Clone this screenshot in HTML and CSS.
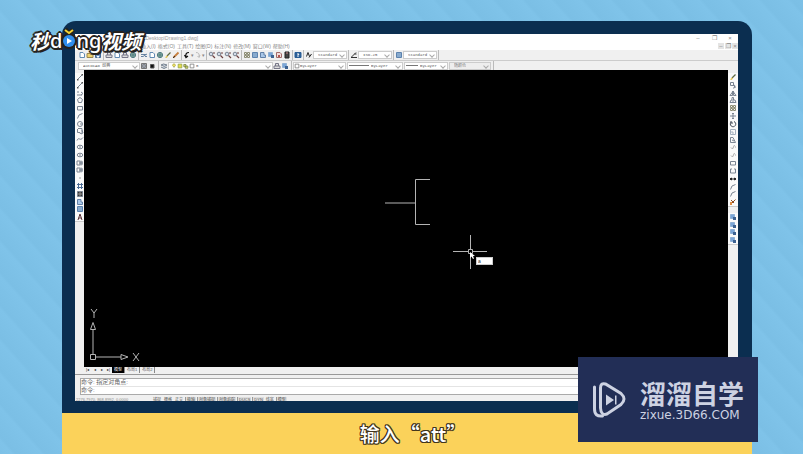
FILE: index.html
```
<!DOCTYPE html>
<html lang="zh-CN">
<head>
    <meta charset="UTF-8">
    <meta name="viewport" content="width=device-width, initial-scale=1.0">
    <title>AutoCAD</title>
    <link rel="stylesheet" href="styles.css">
</head>
<body>
    <!-- Iconos -->
    <svg class="sprite" aria-hidden="true">
        <symbol id="line" viewBox="0 0 8 8"><path d="M1.5 6.5 6.5 1.5"/><path d="M1 6h1.500v1.500H1zM5.500 1H7v1.500H5.500z" fill="#555" stroke="none"/></symbol>
        <symbol id="pline" viewBox="0 0 8 8"><path d="M1 3h2M1 6h5M5 3l2 1.500L5 6"/></symbol>
        <symbol id="polygon" viewBox="0 0 8 8"><path d="M4 1.500 6.500 3.500 5.500 6.500H2.500L1.500 3.500z"/></symbol>
        <symbol id="rect" viewBox="0 0 8 8"><path d="M1.500 2.500h5v3.500h-5z"/></symbol>
        <symbol id="arc" viewBox="0 0 8 8"><path d="M1.500 6.500Q2 2 6.500 1.500"/></symbol>
        <symbol id="circle" viewBox="0 0 8 8"><circle cx="4" cy="4" r="2.500"/><path d="M4 4h2"/></symbol>
        <symbol id="cloud" viewBox="0 0 8 8"><path d="M2 1.500h4v4L4.500 7 4 5.500H1.500V2M6 3l1 3-2 1"/></symbol>
        <symbol id="spline" viewBox="0 0 8 8"><path d="M1 5.500C3 1 4 7 7 2.500"/></symbol>
        <symbol id="ellipse" viewBox="0 0 8 8"><ellipse cx="4" cy="4" rx="2.800" ry="1.800"/><path d="M4 3v2"/></symbol>
        <symbol id="block" viewBox="0 0 8 8"><path d="M1 2h3v4H1zM5 1.500v5M3 4h4M6 2v4"/></symbol>
        <symbol id="point" viewBox="0 0 8 8"><path d="M3.500 3.500h1v1h-1z" fill="#444" stroke="none"/></symbol>
        <symbol id="hatch" viewBox="0 0 8 8"><path d="M2.500 1v6M5.500 1v6M1 2.500h6M1 5.500h6" stroke="#4b6b94"/></symbol>
        <symbol id="fill" viewBox="0 0 8 8"><path d="M1.500 1.500h5v5h-5z" fill="#333"/><path d="M4 1.500v5M1.500 4h5" stroke="#999"/></symbol>
        <symbol id="region" viewBox="0 0 8 8"><path d="M1.500 1.500H5V4h1.500v2.500h-5z" fill="#a9c7e8" stroke="#6281a8"/></symbol>
        <symbol id="table" viewBox="0 0 8 8"><path d="M1.500 1.500h5v5h-5z" fill="#b4d1ed" stroke="#5d83ae"/><path d="M1.500 3h5M1.500 5h5" stroke="#5d83ae"/></symbol>
        <symbol id="text" viewBox="0 0 8 8"><path d="M2 7 4 1l2 6M2.700 5h2.600" stroke="#5a3338"/></symbol>
        <symbol id="brush" viewBox="0 0 8 8"><path d="M3 5 6.500 1.500" stroke="#5f6b45" stroke-width="1.300"/><path d="M1 6.500 3 4.500l1 1-1.500 1.500z" fill="#e3c34b" stroke="none"/></symbol>
        <symbol id="pencil" viewBox="0 0 8 8"><path d="M1.500 6.500 6.500 1.500" stroke="#c77f3e" stroke-width="1.800"/><path d="M1 7 3 5" stroke="#333"/></symbol>
        <symbol id="copy" viewBox="0 0 8 8"><path d="M1.500 1.500h3v3h-3zM4 4l2.500 2.500M4 7a1.500 1.500 0 1 0 1-3"/></symbol>
        <symbol id="mirror" viewBox="0 0 8 8"><path d="M1 6.500h2.500V3zM7 6.500H4.500V3zM3 2.500h2"/></symbol>
        <symbol id="offset" viewBox="0 0 8 8"><path d="M1 6.500h6L6 4H4.500V1.500H3V4H2zM3 5h2"/></symbol>
        <symbol id="array" viewBox="0 0 8 8"><path d="M1.500 1.500h2v2h-2zM4.500 1.500h2v2h-2zM1.500 4.500h2v2h-2zM4.500 4.500h2v2h-2z" stroke="#8c8c72"/></symbol>
        <symbol id="move" viewBox="0 0 8 8"><path d="M4 1v6M1 4h6"/><path d="M3 2l1-1 1 1M3 6l1 1 1-1" fill="none"/></symbol>
        <symbol id="rotate" viewBox="0 0 8 8"><path d="M2.500 1.800A2.700 2.700 0 1 0 5 1.500M2 1v2h2" stroke="#444c58"/></symbol>
        <symbol id="scale" viewBox="0 0 8 8"><path d="M1.500 1.500h5v5h-5zM1.500 4h2.500v2.500" stroke="#a6b2c0"/></symbol>
        <symbol id="stretch" viewBox="0 0 8 8"><path d="M1.500 6.500v-5H4l2.500 5zM3 4l2 1" stroke="#7d8794"/></symbol>
        <symbol id="trim" viewBox="0 0 8 8"><path d="M2 4.500 3.500 6 5.500 2M6 4h1" stroke="#aaa"/></symbol>
        <symbol id="break" viewBox="0 0 8 8"><path d="M3 2H1.500v4H3M5 2h1.500v4H5M3 6h2"/></symbol>
        <symbol id="join" viewBox="0 0 8 8"><path d="M1 4h6M2.500 3v2L1 4zM5.500 3v2L7 4z" stroke="#222" fill="#222"/></symbol>
        <symbol id="explode" viewBox="0 0 8 8"><path d="M1.500 6.500 6.500 1.500M2 2l3 3" stroke="#8f4d22"/><path d="M1 4h2v3H1z" fill="#dc8c44" stroke="none"/></symbol>
        <symbol id="order" viewBox="0 0 8 8"><path d="M1.500 1.500h4v4h-4z" fill="#7ba6d8" stroke="#8fb0d4"/><path d="M4 4h3v3H4z" fill="#3d6291" stroke="none"/></symbol>
        <symbol id="page" viewBox="0 0 8 8"><path d="M2 1.500h3L6.500 3v3.500H2z" fill="#fff" stroke="#638bb4"/></symbol>
        <symbol id="folder" viewBox="0 0 8 8"><path d="M1 2.500h3l.5 1H7v3H1z" fill="#efd26e" stroke="#9a8750"/></symbol>
        <symbol id="save" viewBox="0 0 8 8"><path d="M1.500 1.500h5v5h-5z" fill="#7399c5" stroke="#426994"/><path d="M3 5h2v1.500H3z" fill="#fff" stroke="none"/></symbol>
        <symbol id="print" viewBox="0 0 8 8"><path d="M1 4h6v2.500H1zM2.500 4V1.500h3V4" fill="#ddd" stroke="#778"/></symbol>
        <symbol id="globe" viewBox="0 0 8 8"><circle cx="4" cy="4" r="2.600" fill="#9ec5aa" stroke="#4b7580"/><path d="M2 4h4M4 2v4" stroke="#4b7580"/></symbol>
        <symbol id="cut" viewBox="0 0 8 8"><path d="M1 3.500h5M1 5.500h2L7 3M5 5.500h2" stroke="#6582a1"/></symbol>
        <symbol id="undo" viewBox="0 0 8 8"><path d="M6 1.500Q2 1.500 3 6M1.500 4 3 6.500 5 5" stroke="#111" stroke-width="1.200"/></symbol>
        <symbol id="redo" viewBox="0 0 8 8"><path d="M2 1.500q4 0 3 4.500M3.500 5 5 6.500 6 4" stroke="#bbb"/></symbol>
        <symbol id="zoomer" viewBox="0 0 8 8"><circle cx="3" cy="3" r="1.800" fill="#d3dce8"/><path d="M4.500 4.500 7 7M5 2h2" stroke="#6d3f3f" stroke-width="1.200"/></symbol>
        <symbol id="red" viewBox="0 0 8 8"><path d="M1.500 1.500h3.500L6.500 3v3.500h-5z" fill="#f3dede" stroke="#a36b68"/><path d="M3 4h2v2H3z" fill="#b5544f" stroke="none"/></symbol>
        <symbol id="calc" viewBox="0 0 8 8"><path d="M2 1h4v6H2z" fill="#444" stroke="#222"/><path d="M3 2h2" stroke="#c88"/></symbol>
        <symbol id="help" viewBox="0 0 8 8"><path d="M1 1.500h6v5H1z" fill="#2b5e96" stroke="#2b5e96"/><path d="M3 3h2L4 4.500V6" stroke="#fff"/></symbol>
        <symbol id="astyle" viewBox="0 0 8 8"><path d="M1.500 5.500 3 1.500l1.500 4M4 6.500 6.500 3" stroke="#222"/></symbol>
        <symbol id="dim" viewBox="0 0 8 8"><path d="M1 6.500h6M1.500 6 6 1.500M4.500 3h2" stroke="#333"/></symbol>
        <symbol id="gear" viewBox="0 0 8 8"><path d="M1.500 1.500h5v5h-5z" fill="#aaa" stroke="#777"/><circle cx="4" cy="4" r="1.500"/></symbol>
        <symbol id="solid" viewBox="0 0 8 8"><path d="M2.500 2.500h3.500v3.500H2.500z" fill="#111" stroke="#555"/></symbol>
        <symbol id="layers" viewBox="0 0 8 8"><path d="M1 3 3.500 2 7 3 4.500 4.500zM1 5l3 1.500L7 5" fill="#c7d1dd" stroke="#77828f"/></symbol>
        <symbol id="bulb" viewBox="0 0 8 8"><circle cx="4" cy="3" r="1.800" fill="#f7ee72" stroke="#aca33c"/><path d="M3.500 6h1"/></symbol>
        <symbol id="sun" viewBox="0 0 8 8"><path d="M1.500 1.500h5v5h-5z" fill="#e7dc49" stroke="#8ca14f"/></symbol>
        <symbol id="lock" viewBox="0 0 8 8"><path d="M1 2h3v3H1zM3 4h3.500v3H3z" fill="#d5d96a" stroke="#768046"/></symbol>
        <symbol id="swatch" viewBox="0 0 8 8"><path d="M1.500 1.500h5v5h-5z" fill="#fff" stroke="#777"/></symbol>
    </svg>

    <a href="#" class="logo" aria-label="秒dong视频">秒<span class="latin">d</span><svg class="play" viewBox="0 0 14 24"><path d="M3 1l4 5 4-4" fill="none" stroke="#25221f" stroke-width="5"/><circle cx="7" cy="13" r="8" fill="#25221f"/><circle cx="7" cy="13" r="6" fill="#2f8ded"/><path d="M3 2l4 3 4-3" fill="none" stroke="#f5d331" stroke-width="2"/><path d="M5 10v6l5-3z" fill="#fff"/></svg><span class="latin">ng</span>视频</a>

    <main class="tablet">
        <div class="window">
            <header class="titlebar">
                <h1>\Desktop\Drawing1.dwg]</h1>
                <div class="controls">
                    <button aria-label="最小化">–</button>
                    <button aria-label="还原">❐</button>
                    <button aria-label="关闭">×</button>
                </div>
            </header>

            <nav class="menu">
                <a href="#">插入(I)</a>
                <a href="#">格式(O)</a>
                <a href="#">工具(T)</a>
                <a href="#">绘图(D)</a>
                <a href="#">标注(N)</a>
                <a href="#">修改(M)</a>
                <a href="#">窗口(W)</a>
                <a href="#">帮助(H)</a>
                <div class="controls small">
                    <button aria-label="最小化">–</button>
                    <button aria-label="还原">❐</button>
                    <button aria-label="关闭">×</button>
                </div>
            </nav>

            <!-- Barra estándar -->
            <div class="toolbar">
                <div class="group">
                    <button aria-label="新建"><svg><use href="#page"/></svg></button>
                    <button aria-label="打开"><svg><use href="#folder"/></svg></button>
                    <button aria-label="保存"><svg><use href="#save"/></svg></button>
                </div>
                <div class="group">
                    <button aria-label="打印"><svg><use href="#print"/></svg></button>
                    <button aria-label="预览"><svg><use href="#page"/></svg></button>
                    <button aria-label="发布"><svg><use href="#print"/></svg></button>
                    <button aria-label="网络"><svg><use href="#globe"/></svg></button>
                </div>
                <div class="group">
                    <button aria-label="剪切"><svg><use href="#cut"/></svg></button>
                    <button aria-label="复制"><svg><use href="#page"/></svg></button>
                    <button aria-label="粘贴"><svg><use href="#globe"/></svg></button>
                    <button aria-label="特性匹配"><svg><use href="#brush"/></svg></button>
                    <button aria-label="块编辑器"><svg><use href="#pencil"/></svg></button>
                </div>
                <div class="group">
                    <button aria-label="放弃"><svg><use href="#undo"/></svg></button>
                    <button class="drop" aria-label="放弃列表">▾</button>
                    <button aria-label="重做"><svg><use href="#redo"/></svg></button>
                    <button class="drop" aria-label="重做列表">▾</button>
                </div>
                <div class="group">
                    <button aria-label="平移"><svg><use href="#zoomer"/></svg></button>
                    <button aria-label="实时缩放"><svg><use href="#zoomer"/></svg></button>
                    <button aria-label="窗口缩放"><svg><use href="#zoomer"/></svg></button>
                    <button aria-label="缩放上一个"><svg><use href="#zoomer"/></svg></button>
                </div>
                <div class="group">
                    <button aria-label="特性"><svg><use href="#array"/></svg></button>
                    <button aria-label="设计中心"><svg><use href="#table"/></svg></button>
                    <button aria-label="工具选项板"><svg><use href="#region"/></svg></button>
                    <button aria-label="图纸集"><svg><use href="#order"/></svg></button>
                    <button aria-label="标记集"><svg><use href="#red"/></svg></button>
                    <button aria-label="计算器"><svg><use href="#calc"/></svg></button>
                </div>
                <div class="group">
                    <button aria-label="帮助"><svg><use href="#help"/></svg></button>
                </div>
                <div class="group">
                    <svg><use href="#astyle"/></svg>
                    <div class="combo w-style"><select aria-label="文字样式"><option>Standard</option></select></div>
                </div>
                <div class="group">
                    <svg><use href="#dim"/></svg>
                    <div class="combo w-style"><select aria-label="标注样式"><option>ISO-25</option></select></div>
                </div>
                <div class="group">
                    <svg><use href="#table"/></svg>
                    <div class="combo w-style"><select aria-label="表格样式"><option>Standard</option></select></div>
                </div>
            </div>

            <!-- Barra de capas y propiedades -->
            <div class="toolbar second">
                <div class="group">
                    <div class="combo w-space"><select aria-label="工作空间"><option>AutoCAD 经典</option></select></div>
                    <button aria-label="设置"><svg><use href="#gear"/></svg></button>
                    <button aria-label="我的工作空间"><svg><use href="#solid"/></svg></button>
                </div>
                <div class="group">
                    <button aria-label="图层特性"><svg><use href="#layers"/></svg></button>
                    <div class="combo w-layer">
                        <svg><use href="#bulb"/></svg><svg><use href="#sun"/></svg><svg><use href="#lock"/></svg><svg><use href="#swatch"/></svg>
                        <select aria-label="图层"><option>0</option></select>
                    </div>
                    <button aria-label="置为当前"><svg><use href="#print"/></svg></button>
                    <button aria-label="上一个图层"><svg><use href="#order"/></svg></button>
                </div>
                <div class="group">
                    <div class="combo w-color"><svg><use href="#swatch"/></svg><select aria-label="颜色"><option>ByLayer</option></select></div>
                    <div class="combo w-type"><i class="stroke long"></i><select aria-label="线型"><option>ByLayer</option></select></div>
                    <div class="combo w-weight"><i class="stroke"></i><select aria-label="线宽"><option>ByLayer</option></select></div>
                    <div class="combo w-plot"><select aria-label="打印样式" disabled><option>随颜色</option></select></div>
                </div>
            </div>

            <div class="workspace">
                <div class="tools left">
                    <div class="draw">
                        <button aria-label="直线"><svg><use href="#line"/></svg></button>
                        <button aria-label="构造线"><svg><use href="#line"/></svg></button>
                        <button aria-label="多段线"><svg><use href="#pline"/></svg></button>
                        <button aria-label="正多边形"><svg><use href="#polygon"/></svg></button>
                        <button aria-label="矩形"><svg><use href="#rect"/></svg></button>
                        <button aria-label="圆弧"><svg><use href="#arc"/></svg></button>
                        <button aria-label="圆"><svg><use href="#circle"/></svg></button>
                        <button aria-label="修订云线"><svg><use href="#cloud"/></svg></button>
                        <button aria-label="样条曲线"><svg><use href="#spline"/></svg></button>
                        <button aria-label="椭圆"><svg><use href="#ellipse"/></svg></button>
                        <button aria-label="椭圆弧"><svg><use href="#ellipse"/></svg></button>
                        <button aria-label="插入块"><svg><use href="#block"/></svg></button>
                        <button aria-label="创建块"><svg><use href="#block"/></svg></button>
                        <button aria-label="点"><svg><use href="#point"/></svg></button>
                        <button aria-label="图案填充"><svg><use href="#hatch"/></svg></button>
                        <button aria-label="渐变色"><svg><use href="#fill"/></svg></button>
                        <button aria-label="面域"><svg><use href="#region"/></svg></button>
                        <button aria-label="表格"><svg><use href="#table"/></svg></button>
                        <button aria-label="多行文字"><svg><use href="#text"/></svg></button>
                    </div>
                </div>

                <div class="canvas">
                    <svg class="shape" viewBox="0 0 46 48"><path d="M0 24h30M45 .5H30.500v45H45"/></svg>

                    <div class="crosshair">
                        <svg viewBox="0 0 34 34"><path d="M0 16.500h34M17.500 0v34"/><path d="M15.500 14.500h4v4h-4z" fill="#000"/><path d="M17 17v6l1.500-1.500 1.500 2.500 1-.5-1-2.500h2z" fill="#fff" stroke="none"/></svg>
                        <input type="text" value="a" aria-label="动态输入">
                    </div>

                    <svg class="ucs" viewBox="0 0 50 54">
                        <path d="M.5 45.500h5v5h-5zM3 45V20M.5 20.500 3 13.500 5.500 20.500zM6 48h25M31 45.500l7 2.500-7 2.500z"/>
                        <path d="M1 0l3 4 3-4M4 4v5M43 44l6 8M49 44l-6 8"/>
                    </svg>
                </div>

                <div class="tools right">
                    <div class="modify">
                        <button aria-label="删除"><svg><use href="#brush"/></svg></button>
                        <button aria-label="复制对象"><svg><use href="#copy"/></svg></button>
                        <button aria-label="镜像"><svg><use href="#mirror"/></svg></button>
                        <button aria-label="偏移"><svg><use href="#offset"/></svg></button>
                        <button aria-label="阵列"><svg><use href="#array"/></svg></button>
                        <button aria-label="移动"><svg><use href="#move"/></svg></button>
                        <button aria-label="旋转"><svg><use href="#rotate"/></svg></button>
                        <button aria-label="缩放"><svg><use href="#scale"/></svg></button>
                        <button aria-label="拉伸"><svg><use href="#stretch"/></svg></button>
                        <button aria-label="修剪"><svg><use href="#trim"/></svg></button>
                        <button aria-label="延伸"><svg><use href="#trim"/></svg></button>
                        <button aria-label="打断于点"><svg><use href="#rect"/></svg></button>
                        <button aria-label="打断"><svg><use href="#break"/></svg></button>
                        <button aria-label="合并"><svg><use href="#join"/></svg></button>
                        <button aria-label="倒角"><svg><use href="#arc"/></svg></button>
                        <button aria-label="圆角"><svg><use href="#arc"/></svg></button>
                        <button aria-label="分解"><svg><use href="#explode"/></svg></button>
                    </div>
                    <div class="draworder">
                        <button aria-label="前置"><svg><use href="#order"/></svg></button>
                        <button aria-label="后置"><svg><use href="#order"/></svg></button>
                        <button aria-label="置于对象之上"><svg><use href="#order"/></svg></button>
                        <button aria-label="置于对象之下"><svg><use href="#order"/></svg></button>
                    </div>
                </div>
            </div>

            <div class="tabs">
                <button class="arrow" aria-label="第一个">|◂</button>
                <button class="arrow" aria-label="上一个">◂</button>
                <button class="arrow" aria-label="下一个">▸</button>
                <button class="arrow" aria-label="最后一个">▸|</button>
                <button class="tab active">模型</button>
                <button class="tab">布局1</button>
                <button class="tab">布局2</button>
            </div>

            <div class="command">
                <p>命令: 指定对角点:</p>
                <label>命令:<input type="text" aria-label="命令"></label>
            </div>

            <footer class="status">
                <span class="coords">2276.7970, 868.8992, 0.0000</span>
                <button>捕捉</button>
                <button>栅格</button>
                <button>正交</button>
                <button class="on">极轴</button>
                <button class="on">对象捕捉</button>
                <button class="on">对象追踪</button>
                <button class="on">DUCS</button>
                <button class="on">DYN</button>
                <button>线宽</button>
                <button class="on">模型</button>
            </footer>
        </div>
    </main>

    <p class="caption">输入“att”</p>

    <!-- Marca de agua -->
    <aside class="watermark">
        <svg viewBox="0 0 36 38">
            <path d="M2.500 6v22q0 8 8 7" />
            <path d="M8.500 27V7q0-5.500 5-4L29 12.500q6 5.500 0 11L15 33q-6 2-6.500-6" />
            <path d="M14 13.500v11l8-5.500zM23 14.500h1.500v9H23z" class="solid" />
        </svg>
        <div>
            <strong>溜溜自学</strong>
            <span>zixue.3D66.COM</span>
        </div>
    </aside>
</body>
</html>
```
FILE: styles.css
```
* {
    box-sizing: border-box;
}
body {
    position: relative;
    display: flex;
    flex-direction: column;
    min-height: 100vh;
    margin: 0;
    padding: 21px 51px 0 62px;
    font-family: "Liberation Sans", "Noto Sans CJK SC", sans-serif;
    background: repeating-linear-gradient(48deg, #7dc1e7 0, #7fc3e9 9px, #7bbfe5 12px, #7dc1e7 22px);
    overflow: hidden;
}
button {
    display: flex;
    align-items: center;
    justify-content: center;
    padding: 0;
    border: none;
    background: none;
    color: inherit;
    font: inherit;
    cursor: pointer;
}
a {
    color: inherit;
    text-decoration: none;
}
.sprite {
    position: absolute;
    width: 0;
    height: 0;
}

/* Logo */
.logo {
    position: absolute;
    top: 27px;
    left: 30px;
    z-index: 2;
    display: flex;
    align-items: center;
    height: 26px;
    color: #fff;
    font: italic bold 20px "Noto Sans CJK SC", sans-serif;
    text-shadow: 2px 0 #25221f, -2px 0 #25221f, 0 2px #25221f, 0 -2px #25221f,
        1px 1px #25221f, -1px -1px #25221f, 1px -1px #25221f, -1px 1px #25221f, 2px 2px #25221f;
}
.logo .latin {
    font: 500 20px "Noto Sans", sans-serif;
}
.play {
    width: 14px;
    height: 24px;
    overflow: visible;
}

/* Tableta */
.tablet {
    display: flex;
    flex: 1;
    padding: 13px 14px 12px 13px;
    border-radius: 14px 14px 0 0;
    background: #0b2e50;
}
.window {
    display: flex;
    flex: 1;
    flex-direction: column;
    min-width: 0;
    background: #f0f0f0;
    color: #888;
    font-size: 5px;
    line-height: 6px;
    overflow: hidden;
}
.titlebar,
.menu {
    display: flex;
    align-items: center;
    height: 8px;
    background: #fff;
}
.titlebar h1 {
    margin: 0;
    padding-left: 69px;
    color: #999;
    font-size: 5px;
    font-weight: normal;
}
.menu {
    gap: 2px;
    padding-left: 66px;
    white-space: nowrap;
}
.controls {
    display: flex;
    gap: 8px;
    margin-left: auto;
    padding-right: 4px;
    font-size: 6px;
}
.controls button {
    width: 8px;
    height: 6px;
}
.controls.small {
    gap: 1px;
    padding-right: 0;
}
.controls.small button {
    width: 6px;
    background: #e4e4e4;
}

/* Barras de herramientas */
.window svg {
    flex: none;
    width: 8px;
    height: 8px;
    fill: none;
    stroke: #7a8492;
    stroke-width: 1;
}
.toolbar {
    display: flex;
    height: 10px;
    padding-left: 3px;
}
.toolbar.second {
    border-top: 1px solid #ccc;
}
.group {
    display: flex;
    align-items: center;
    padding-right: 1px;
    border-right: 1px solid #bbb;
    margin-right: 1px;
}
.second .group {
    padding-right: 2px;
}
.toolbar .drop {
    width: 3px;
    font-size: 5px;
}
.combo {
    position: relative;
    display: flex;
    align-items: center;
    height: 8px;
    border: 1px solid #ccc;
    background: #fff;
}
.combo::after {
    content: "";
    position: absolute;
    top: 1px;
    right: 2px;
    width: 3px;
    height: 3px;
    border: solid #aaa;
    border-width: 0 1px 1px 0;
    transform: rotate(45deg);
}
.combo select {
    flex: 1;
    min-width: 0;
    padding: 0 0 0 4px;
    border: none;
    background: none;
    color: #555;
    font: 4px/6px "Liberation Mono", "Noto Sans CJK SC", monospace;
    appearance: none;
}
.combo svg {
    width: 6px;
    height: 6px;
}
.w-style {
    width: 34px;
}
.w-space {
    width: 62px;
}
.w-layer {
    width: 105px;
    padding-left: 2px;
}
.second .w-layer select {
    padding-left: 1px;
}
.w-color {
    width: 53px;
    margin-right: 1px;
}
.second .w-color select {
    padding-left: 0;
}
.w-type {
    width: 56px;
    margin-right: 1px;
}
.w-weight {
    width: 44px;
    margin-right: 1px;
}
.w-plot {
    width: 42px;
    background: #eee;
}
.stroke {
    width: 12px;
    height: 1px;
    margin-left: 1px;
    background: #777;
}
.stroke.long {
    width: 20px;
}
.stroke + select {
    padding-left: 2px;
}

/* Zona de dibujo */
.workspace {
    display: flex;
    flex: 1;
}
.tools {
    display: flex;
    flex-direction: column;
    gap: 6px;
    padding: 3px 0 0;
}
.left {
    width: 9px;
}
.right {
    width: 10px;
}
.tools > div {
    display: flex;
    flex-direction: column;
    background: #fafafa;
    border-bottom: 1px solid #ccc;
}
.tools button {
    flex: 1;
    min-height: 0;
}
.draw {
    height: 149px;
}
.modify {
    height: 134px;
}
.draworder {
    height: 32px;
}
.canvas {
    position: relative;
    flex: 1;
    background: #000;
}
.canvas svg {
    position: absolute;
    stroke: #b4b4b4;
}
.canvas .shape {
    top: 109px;
    left: 301px;
    width: 46px;
    height: 48px;
}
.crosshair {
    position: absolute;
    top: 165px;
    left: 369px;
}
.canvas .crosshair svg {
    width: 34px;
    height: 34px;
}
.crosshair input {
    position: absolute;
    top: 22px;
    left: 23px;
    width: 17px;
    height: 8px;
    padding: 0 1px;
    border: 1px solid #ccc;
    background: #fff;
    color: #333;
    font-size: 5px;
    line-height: 6px;
}
.canvas .ucs {
    bottom: 4px;
    left: 6px;
    width: 50px;
    height: 54px;
}

/* Pestañas, comandos y estado */
.tabs {
    display: flex;
    height: 8px;
    padding: 0 0 1px 9px;
    border-bottom: 1px solid #999;
    font-size: 4px;
}
.tabs .arrow {
    width: 7px;
    color: #222;
}
.tab {
    padding: 0 2px;
    border-right: 1px solid #888;
    color: #555;
}
.tab.active {
    background: #000;
    color: #fff;
}
.command {
    margin: 3px 0 0 5px;
    border: solid #aaa;
    border-width: 1px 0 1px 1px;
    background: #fff;
    color: #666;
    font-size: 6px;
    line-height: 7px;
}
.command p {
    margin: 0;
    border-bottom: 1px solid #e4e4e4;
}
.command label {
    display: flex;
    height: 7px;
}
.command input {
    flex: 1;
    padding: 0;
    border: none;
    font: inherit;
    outline: none;
}
.status {
    display: flex;
    gap: 1px;
    height: 6px;
    padding: 2px 0 0 1px;
    font-size: 4px;
    overflow: hidden;
}
.status .coords {
    width: 75px;
}
.status button {
    flex: none;
    height: 6px;
    padding: 0 1px;
    color: #555;
}
.status .on {
    background: #ddd;
    border-left: 1px solid #999;
}

/* Subtítulo */
.caption {
    margin: 0;
    padding-left: 12px;
    height: 41px;
    background: #fbd25a;
    color: #fff;
    font: 500 20px/41px "Noto Sans CJK SC", sans-serif;
    text-align: center;
    text-shadow: 1px 0 #42351c, -1px 0 #42351c, 0 1px #42351c, 0 -1px #42351c,
        1px 1px #42351c, -1px -1px #42351c, 1px -1px #42351c, -1px 1px #42351c;
}

/* Marca de agua */
.watermark {
    position: absolute;
    right: 45px;
    bottom: 12px;
    display: flex;
    align-items: center;
    gap: 12px;
    width: 180px;
    height: 85px;
    padding-left: 14px;
    background: #222e56;
    color: #cdd2e2;
}
.watermark svg {
    width: 36px;
    height: 38px;
    fill: none;
    stroke: #cdd2e2;
    stroke-width: 3;
    stroke-linecap: round;
}
.watermark .solid {
    fill: #cdd2e2;
    stroke: none;
}
.watermark strong,
.watermark span {
    display: block;
}
.watermark strong {
    font: bold 26px/30px "Noto Sans CJK SC", sans-serif;
}
.watermark span {
    font: 12px/14px "DejaVu Sans", sans-serif;
}
```
